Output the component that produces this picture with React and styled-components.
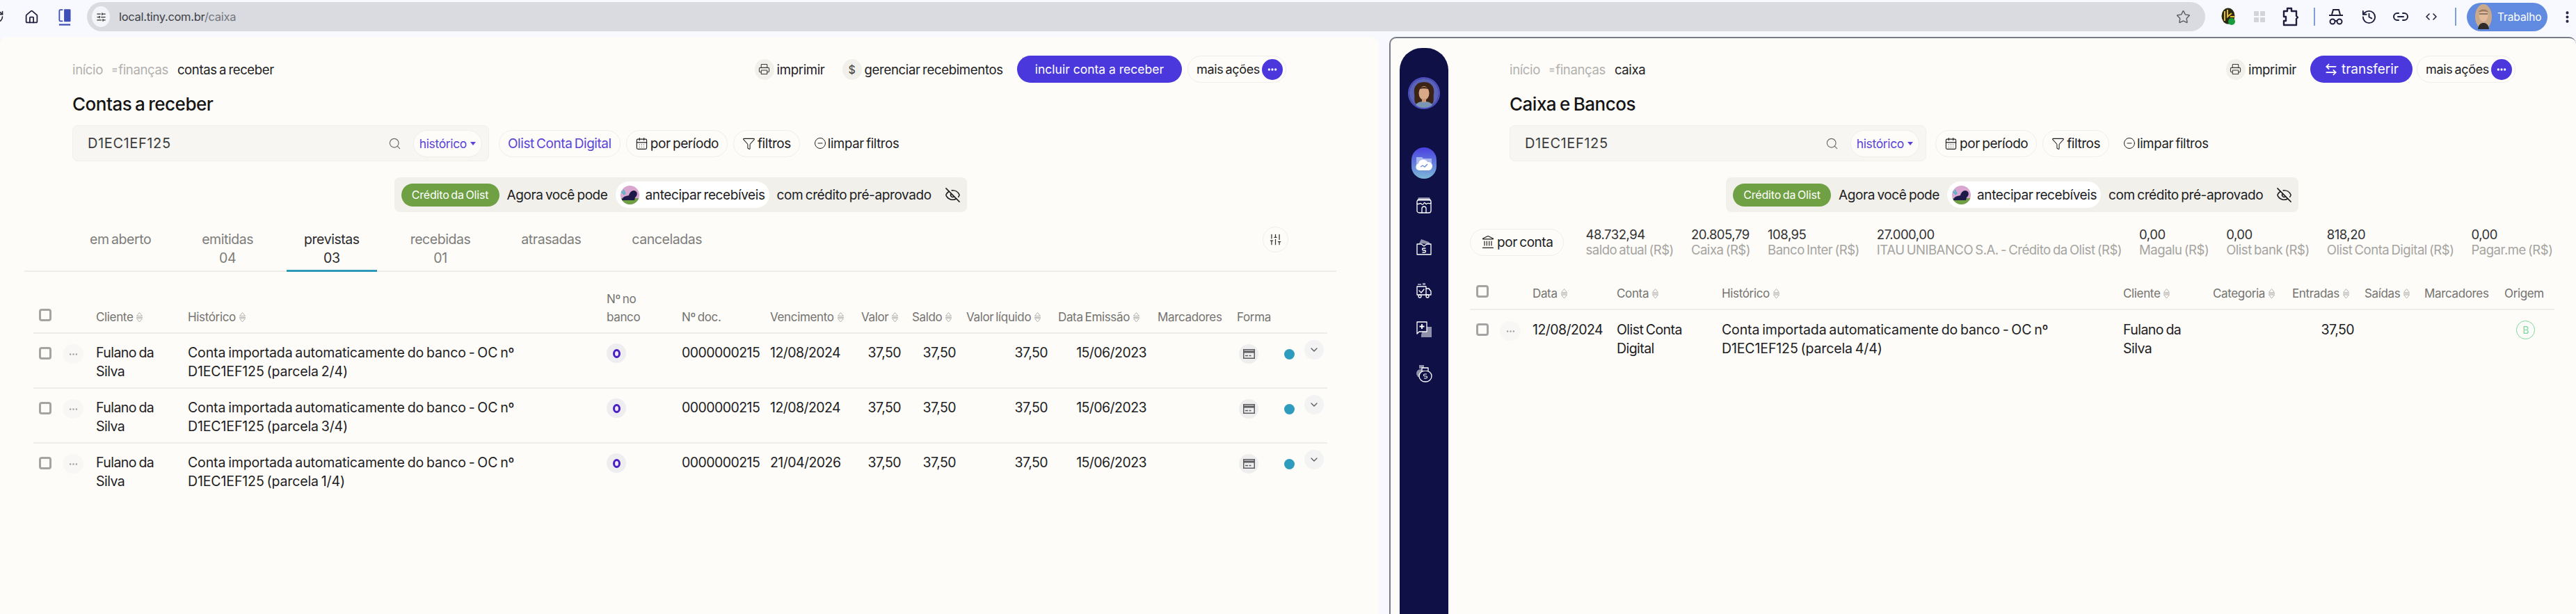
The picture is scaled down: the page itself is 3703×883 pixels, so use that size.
import React from 'react'
import styled, { createGlobalStyle } from 'styled-components'
import {
  Home, Printer, Search, CalendarDays, Funnel, CircleMinus, SlidersVertical, Landmark,
  ArrowLeftRight, EyeOff, ChevronDown, Ellipsis, Star, Link2, History, ChevronLeft, ChevronRight,
  RotateCw, EllipsisVertical, SlidersHorizontal,
} from 'lucide-react'

const GlobalStyle = createGlobalStyle`
  * { box-sizing: border-box; }
  html, body { margin: 0; padding: 0; }
  body {
    background: #f8f9fe;
    font-family: Inter, "Noto Sans", "Liberation Sans", sans-serif;
    font-size: 18px;
    letter-spacing: -0.35px;
    word-spacing: -1.5px;
    color: #1d1d1f;
    overflow: hidden;
  }
`

const Page = styled.div`
  width: 3703px;
  height: 883px;
  display: flex;
  flex-direction: column;
  overflow: hidden;
`

/* browser toolbar */

const BrowserBar = styled.div`
  height: 53px;
  flex: none;
  display: flex;
  align-items: center;
  padding-bottom: 5px;
  background: #f8f9fe;
  overflow: hidden;
`

const ReloadSlot = styled.div`
  width: 6px;
  display: flex;
  justify-content: flex-end;
  color: #2c2c38;
`

const ToolIcon = styled.div`
  width: ${p => p.$w || 44}px;
  flex: none;
  display: flex;
  justify-content: center;
  color: ${p => p.$color || '#1f1f3d'};
`

const AddressBar = styled.div`
  flex: none;
  width: 3045px;
  height: 42px;
  margin-left: 23px;
  padding: 0 21px 0 7px;
  border-radius: 21px;
  background: #d9dbe0;
  display: flex;
  align-items: center;
  color: #3e4046;
  font-size: 16.5px;
  letter-spacing: -0.3px;
`

const TuneBubble = styled.div`
  width: 26px;
  height: 30px;
  border-radius: 50%;
  background: #f4f5f9;
  display: flex;
  align-items: center;
  justify-content: center;
  margin-right: 13px;
`

const UrlPath = styled.span`
  color: #74767d;
`

const UrlText = styled.div`
  flex: 1;
`

const Separator = styled.div`
  width: 2px;
  height: 26px;
  flex: none;
  background: #7f9fd8;
`

const ProfilePill = styled.div`
  width: 116px;
  height: 41px;
  flex: none;
  margin-left: 15px;
  border-radius: 21px;
  background: #608be0;
  display: flex;
  align-items: center;
  padding-left: 12px;
  gap: 8px;
  color: #fff;
  font-size: 15.5px;
  letter-spacing: -0.1px;
`

/* panels */

const Panels = styled.div`
  flex: 1;
  min-height: 0;
  display: flex;
  gap: 15px;
`

const Panel = styled.section`
  height: 100%;
  background: #fdfcf9;
  border-radius: 10px 10px 0 0;
  display: flex;
  flex: ${p => (p.$focused ? '1' : 'none')};
  width: ${p => (p.$focused ? 'auto' : '1982px')};
  min-width: 0;
  padding: 0 ${p => p.$pr}px 0 ${p => p.$pl}px;
  border-top: ${p => (p.$focused ? '2px solid #767c88' : '0')};
  border-left: ${p => (p.$focused ? '2px solid #767c88' : '0')};
`

const Sidebar = styled.nav`
  width: 70px;
  flex: none;
  margin: 14px 31px 0 0;
  border-radius: 32px 32px 0 0;
  background: #0f1046;
  display: flex;
  flex-direction: column;
  align-items: center;
`

const SideAvatar = styled.div`
  width: 46px;
  height: 46px;
  margin-top: 42px;
  margin-bottom: 55px;
  border-radius: 50%;
  overflow: hidden;
  border: 2px solid #4f50c4;
`

const ActiveItem = styled.div`
  width: 36px;
  height: 45px;
  border-radius: 18px;
  background: linear-gradient(180deg, #4a3fe0 0%, #7cb8d8 100%);
  display: flex;
  align-items: center;
  justify-content: center;
`

const SideItem = styled.div`
  height: 24px;
  margin-top: ${p => p.$mt}px;
  display: flex;
  align-items: center;
  justify-content: center;
`

const Main = styled.main`
  flex: 1;
  min-width: 0;
`

const TopRow = styled.div`
  height: 39px;
  margin-top: ${p => p.$mt}px;
  padding: 0 ${p => p.$pr}px 0 ${p => p.$pl}px;
  display: flex;
  align-items: center;
  justify-content: space-between;
`

const Crumbs = styled.div`
  display: flex;
  align-items: center;
  font-size: 18.5px;
  color: #b2b1ae;
`

const CrumbMark = styled.span`
  margin: 0 2px 0 13px;
  font-size: 13px;
`

const CrumbNow = styled.span`
  margin-left: 13px;
  color: #222;
`

const Actions = styled.div`
  display: flex;
  align-items: center;
`

const IconAction = styled.div`
  display: flex;
  align-items: center;
  gap: 4px;
  margin-right: 25px;
  font-size: 18.6px;
`

const IconBubble = styled.span`
  width: 28px;
  height: 30px;
  border-radius: 50%;
  background: #f1f0ea;
  color: #3a3a3a;
  display: flex;
  align-items: center;
  justify-content: center;
  font-size: 16px;
`

const PrimaryButton = styled.button`
  height: 39px;
  padding: 0 ${p => p.$px}px;
  margin-left: -5px;
  border: 0;
  border-radius: 20px;
  background: #4a38dd;
  color: #fff;
  font: inherit;
  font-size: ${p => p.$fs}px;
  display: flex;
  align-items: center;
  gap: 5px;
`

const MoreButton = styled.div`
  height: 39px;
  margin-left: ${p => p.$ml}px;
  padding: 0 4px 0 12px;
  border: 1px solid #efeee9;
  border-radius: 20px;
  display: flex;
  align-items: center;
  gap: 3px;
  font-size: 18px;
`

const MoreDot = styled.span`
  width: 30px;
  height: 30px;
  border-radius: 50%;
  background: #4a38dd;
  color: #fff;
  display: flex;
  align-items: center;
  justify-content: center;
`

const Title = styled.h1`
  margin: 15px 0 14px;
  padding-left: ${p => p.$pl}px;
  height: 32px;
  line-height: 32px;
  font-size: 26px;
  font-weight: 500;
  letter-spacing: -0.5px;
  color: #151515;
`

const FilterRow = styled.div`
  height: 52px;
  padding-left: ${p => p.$pl}px;
  display: flex;
  align-items: center;
`

const SearchBox = styled.div`
  width: 599px;
  height: 52px;
  flex: none;
  padding: 0 9px 0 21px;
  border: 1px solid #f1f0eb;
  border-radius: 8px;
  background: #f7f6f2;
  display: flex;
  align-items: center;
  font-size: 20px;
  letter-spacing: 0.6px;
  color: #3c3c3c;
`

const SearchText = styled.div`
  flex: 1;
`

const Pill = styled.div`
  height: 39px;
  flex: none;
  margin-left: ${p => p.$ml || 0}px;
  margin-right: ${p => p.$mr || 0}px;
  padding: 0 ${p => p.$px || 12}px;
  border: 1px solid #efeee9;
  border-radius: 20px;
  background: #fdfcf9;
  display: flex;
  align-items: center;
  gap: 3px;
  font-size: 19px;
  letter-spacing: -0.45px;
  color: ${p => (p.$accent ? '#5a45d6' : '#1d1d1f')};
`

const HistoryPill = styled(Pill)`
  font-size: 17.5px;
  letter-spacing: -0.35px;
`

const CaretDown = styled.span`
  width: 0;
  height: 0;
  margin-left: 2px;
  border-left: 4px solid transparent;
  border-right: 4px solid transparent;
  border-top: 5px solid #5a45d6;
`

const PlainLink = styled.div`
  margin-left: 20px;
  display: flex;
  align-items: center;
  gap: 2px;
  font-size: 18.5px;
`

const Banner = styled.div`
  width: 823px;
  height: 50px;
  margin: 23px auto 0;
  padding-left: 10px;
  border-radius: 8px;
  background: #f1f0eb;
  display: flex;
  align-items: center;
  font-size: 19px;
  letter-spacing: -0.4px;
`

const GreenTag = styled.span`
  width: 141px;
  height: 33px;
  border-radius: 17px;
  background: #6fa044;
  color: #fff;
  display: flex;
  align-items: center;
  justify-content: center;
  font-size: 16px;
  letter-spacing: -0.2px;
  white-space: nowrap;
`

const BannerText = styled.span`
  margin-left: 11px;
  white-space: nowrap;
`

const BannerPill = styled.span`
  width: 221px;
  height: 38px;
  margin-left: 11px;
  padding-left: 7px;
  border-radius: 19px;
  background: #fff;
  display: flex;
  align-items: center;
  gap: 9px;
  white-space: nowrap;
`

const EyeSlot = styled.span`
  margin-left: 19px;
  display: flex;
`

const Tabs = styled.div`
  margin-top: 26px;
  padding: 0 69px;
  border-bottom: 2px solid #eeede9;
  display: flex;
  gap: 23px;
  align-items: flex-start;
`

const Tab = styled.div`
  height: 60px;
  padding: 0 25px 5px;
  margin-bottom: -2px;
  border-bottom: 3px solid ${p => (p.$active ? '#2f9ab8' : 'transparent')};
  text-align: center;
  line-height: 27px;
  font-size: 19.5px;
  letter-spacing: -0.45px;
  color: ${p => (p.$active ? '#2b2b2b' : '#7d7c79')};
`

const TabTools = styled.div`
  width: 37px;
  height: 37px;
  margin: -5px 0 0 auto;
  border: 1px solid #efeee9;
  border-radius: 50%;
  display: flex;
  align-items: center;
  justify-content: center;
  color: #333;
`

const Table = styled.div`
  margin: ${p => p.$mt}px ${p => p.$mx}px 0;
`

const HeadRow = styled.div`
  display: grid;
  grid-template-columns: ${p => p.$cols};
  align-items: end;
  padding-bottom: ${p => p.$pb}px;
  border-bottom: 2px solid #eeede9;
  line-height: 26px;
  font-size: 17px;
  color: #74736f;
`

const HeadCell = styled.div`
  display: flex;
  align-items: center;
  gap: 4px;
  white-space: nowrap;
`

const TwoLine = styled.div`
  white-space: normal;
  width: 60px;
`

const BodyRow = styled.div`
  display: grid;
  grid-template-columns: ${p => p.$cols};
  align-items: start;
  min-height: 79px;
  padding-top: ${p => p.$pt}px;
  border-bottom: ${p => (p.$last ? '0' : '2px solid #eeede9')};
  line-height: 27px;
  font-size: 19.5px;
  letter-spacing: -0.55px;
  color: #1d1d1f;
`

const Cell = styled.div`
  padding-right: ${p => p.$pr || 0}px;
  text-align: ${p => (p.$right ? 'right' : 'left')};
`

const HistoryCell = styled(Cell)`
  letter-spacing: -0.12px;
`

const Check = styled.div`
  width: 18px;
  height: 18px;
  margin: ${p => p.$mt || 0}px 0 ${p => p.$mb || 0}px ${p => p.$ml}px;
  border: 3px solid #a5a3a3;
  border-radius: 4px;
  background: #fdfcf9;
`

const RowMenu = styled.div`
  width: 30px;
  height: 28px;
  margin-top: 1px;
  border-radius: 50%;
  background: #f8f7f5;
  color: #a09fa6;
  display: flex;
  align-items: center;
  justify-content: center;
`

const SoftCircle = styled.div`
  width: 28px;
  height: 28px;
  border-radius: 50%;
  background: ${p => p.$bg || '#eeeeee'};
  display: flex;
  align-items: center;
  justify-content: center;
  color: #5d5c60;
`

const FormaCell = styled.div`
  display: flex;
  align-items: flex-start;
  margin-left: 3px;
  padding-top: 1px;
`

const StatusDot = styled.span`
  width: 15px;
  height: 15px;
  margin: 7px 14px 0 37px;
  border-radius: 50%;
  flex: none;
  background: #2e9dbd;
`

const Toggle = styled(SoftCircle)`
  margin-top: -6px;
  background: #f4f3f4;
  flex: none;
`

const BankRing = styled.span`
  width: 11px;
  height: 13px;
  border: 3px solid #4a1fc8;
  border-radius: 50%;
`

const Summary = styled.div`
  height: 40px;
  margin-top: 23px;
  display: flex;
  align-items: center;
  gap: 25px;
`

const SummaryItem = styled.div`
  line-height: 22px;
  font-size: 18.5px;
  letter-spacing: -0.47px;
  white-space: nowrap;
  color: #333;
`

const SummaryLabel = styled.div`
  color: #a5a4a0;
`

const OriginBadge = styled.div`
  width: 27px;
  height: 27px;
  margin: 0 0 0 17px;
  border: 1.5px solid #7ed8a0;
  border-radius: 50%;
  display: flex;
  align-items: center;
  justify-content: center;
  font-size: 14px;
  color: #7ed8a0;
`

/* drawings */

const Sort = () => (
  <svg width="11" height="16" viewBox="0 0 11 16" fill="none" stroke="#b5b4b0" strokeWidth="1">
    <path d="M5.5 1.5 9.5 6.5H1.5Z" />
    <path d="M1 8.5h9" />
    <path d="M1.5 10h8l-4 5Z" />
  </svg>
)

const SidePanelIcon = () => (
  <svg width="20" height="27" viewBox="0 0 20 27">
    <path d="M7 2H3a1.5 1.5 0 0 0-1.5 1.5v15A1.5 1.5 0 0 0 3 20h4" fill="none" stroke="#3f4fb8" strokeWidth="2" />
    <path d="M9 1h9a1.5 1.5 0 0 1 1.5 1.5v17A1.5 1.5 0 0 1 18 21H9Z" fill="#3f4fb8" />
    <rect x="1" y="24.5" width="18" height="2.5" fill="#3f4fb8" />
  </svg>
)

const ExtensionBadge = () => (
  <svg width="22" height="26" viewBox="0 0 22 26">
    <ellipse cx="10" cy="12" rx="9.5" ry="11.5" fill="#2a2a14" />
    <path d="M5 5v14M9 3v10l6-5M13 13h6" stroke="#e3b92e" strokeWidth="2" fill="none" />
    <circle cx="15" cy="20" r="5" fill="#1a9b3c" />
  </svg>
)

const FaintGrid = () => (
  <svg width="16" height="16" viewBox="0 0 16 16" fill="#d4d5da">
    <rect x="0" y="0" width="7" height="7" rx="1" />
    <rect x="9" y="0" width="7" height="7" rx="1" />
    <rect x="0" y="9" width="7" height="7" rx="1" />
    <rect x="9" y="9" width="7" height="7" rx="1" />
  </svg>
)

const PuzzleIcon = () => (
  <svg width="24" height="28" viewBox="0 0 24 28" fill="none" stroke="#1f1f3d" strokeWidth="2.4" strokeLinejoin="round">
    <path d="M3 6h5V2h6v4h7v7l2 2-2 2v9H3v-6h3v-6H3Z" />
  </svg>
)

const IncognitoIcon = () => (
  <svg width="22" height="24" viewBox="0 0 22 24" fill="none" stroke="#1f1f3d" strokeWidth="2">
    <path d="M5 9 7 2h8l2 7" />
    <path d="M1 10h20" />
    <circle cx="6" cy="19" r="3.5" />
    <circle cx="16" cy="19" r="3.5" />
    <path d="M9.5 18h3" />
  </svg>
)

const PersonFace = () => (
  <svg width="24" height="36" viewBox="0 0 24 36">
    <ellipse cx="12" cy="18" rx="12" ry="18" fill="#c9a98a" />
    <path d="M4 36c1-7 4-9 8-9s7 2 8 9Z" fill="#2d2a2a" />
    <ellipse cx="12" cy="16" rx="6.5" ry="9" fill="#e3bb9c" />
    <path d="M5 12c1-6 13-6 14 0-3-2-11-2-14 0Z" fill="#9a7a5c" />
    <path d="M6 14h12" stroke="#3a3028" strokeWidth="1" />
  </svg>
)

const WomanFace = () => (
  <svg width="42" height="42" viewBox="0 0 42 42">
    <rect width="42" height="42" fill="#5b63b8" />
    <path d="M7 22C5 8 15 5 21 5s16 3 14 17c-1 6 1 10-2 14H9c-3-4-1-8-2-14Z" fill="#3b2415" />
    <path d="M8 42c1-8 7-9 13-9s12 1 13 9Z" fill="#7b95b5" />
    <ellipse cx="21" cy="21" rx="7.5" ry="10" fill="#d9a887" />
    <path d="M18 29h6v5h-6Z" fill="#c9987a" />
    <path d="M14 15c3-4 11-4 14 0-4-1-10-1-14 0Z" fill="#3b2415" />
  </svg>
)

const BannerArt = () => (
  <svg width="27" height="27" viewBox="0 0 27 27">
    <clipPath id="banner-art"><circle cx="13.5" cy="13.5" r="13.5" /></clipPath>
    <g clipPath="url(#banner-art)">
      <rect width="27" height="27" fill="#d8a6cf" />
      <rect y="18" width="27" height="9" fill="#6fa044" />
      <path d="M2 20c2-6 8-5 10-6 1-5 6-9 10-6 3 2 2 7-1 9l-1 4H2Z" fill="#1d1a4a" />
      <path d="M1 8l5 5M4 6l3 6" stroke="#5ab4c8" strokeWidth="2" />
    </g>
  </svg>
)

const CardIcon = () => (
  <svg width="17" height="14" viewBox="0 0 17 14" fill="none">
    <rect x=".75" y=".75" width="15.5" height="12.5" stroke="#5d5c60" strokeWidth="1.5" />
    <rect x="1" y="2.5" width="15" height="3" fill="#5d5c60" />
    <path d="M3 9.5h4M8.5 9.5h3" stroke="#5d5c60" strokeWidth="1.5" />
  </svg>
)

const sideStroke = { fill: 'none', stroke: '#fff', strokeWidth: 1.3, strokeLinejoin: 'round', strokeLinecap: 'round' }

const CloudFolder = () => (
  <svg width="28" height="28" viewBox="0 0 28 28">
    <path d="M3 5h8l2 2h12v13H3Z" fill="#a9b8ee" />
    <path d="M7 24a5 5 0 0 1-1-9.8A7 7 0 0 1 19 12a6 6 0 0 1 2 12Z" fill="#fff" />
    <path d="M9 19l3-2 3 2 4-4" fill="none" stroke="#6f8fd8" strokeWidth="1.4" />
  </svg>
)

const StoreIcon = () => (
  <svg width="22" height="24" viewBox="0 0 22 24">
    <path d="M3 1h16l2 5H1Z" fill="#8f90aa" />
    <g {...sideStroke}>
      <rect x="1" y="4" width="20" height="19" rx="3" />
      <path d="M1 10c3 2 4-2 6 0s3 1 4-1 3 3 4 1 4 1 6-1" />
      <path d="M8 23v-6a3 3 0 0 1 6 0v6" />
    </g>
  </svg>
)

const WalletIcon = () => (
  <svg width="24" height="24" viewBox="0 0 24 24">
    <path d="M5 7 8 1l11 4 2 3Z" fill="#8f90aa" />
    <g {...sideStroke}>
      <path d="M2 8h6l4 3 4-3h6v15H2Z" />
      <path d="M14 14h-3a1 1 0 0 0 0 3h2a1 1 0 0 1 0 3h-3" />
    </g>
  </svg>
)

const TruckIcon = () => (
  <svg width="24" height="24" viewBox="0 0 24 24">
    <path d="M3 3h5v2H3ZM10 2h4v3h-4Z" fill="#8f90aa" />
    <g {...sideStroke}>
      <path d="M2 7h13v12H2Z" />
      <path d="M15 10h4l3 4v5h-7" />
      <circle cx="6" cy="21" r="2" />
      <circle cx="17" cy="21" r="2" />
      <path d="m5 13 3 3 4-5" />
    </g>
  </svg>
)

const ChatIcon = () => (
  <svg width="24" height="26" viewBox="0 0 24 26">
    <path d="M12 10h11v15H8v-4Z" fill="#8f90aa" />
    <g {...sideStroke} fill="#0f1046">
      <path d="M2 3h14v14H5l-3 3Z" />
    </g>
    <path d="M9 6v7M5.5 9.5h7" stroke="#fff" strokeWidth="1.8" />
  </svg>
)

const BagIcon = () => (
  <svg width="24" height="26" viewBox="0 0 24 26">
    <path d="M5 1h7v5H5Z" fill="#8f90aa" />
    <circle cx="7" cy="13" r="6" fill="#8f90aa" />
    <g {...sideStroke} fill="#0f1046">
      <ellipse cx="14" cy="17" rx="9" ry="8" />
      <path d="M9 9V5h9v4" />
    </g>
    <path d="M16 14h-3a1 1 0 0 0 0 3h2a1 1 0 0 1 0 3h-3" fill="none" stroke="#fff" strokeWidth="1.1" />
  </svg>
)

/* data */

const receberCols = '42px 48px 132px 602px 108px 127px 131px 73px 78px 132px 143px 114px 129px'
const caixaCols = '43px 47px 121px 151px 577px 129px 114px 104px 86px 115px 72px'

const receberHead = [
  ['Cliente', true], ['Histórico', true], ['Nº no banco', false], ['Nº doc.', false], ['Vencimento', true], ['Valor', true],
  ['Saldo', true], ['Valor líquido', true], ['Data Emissão', true], ['Marcadores', false], ['Forma', false],
]

const receberRows = [
  { parcela: '2/4', venc: '12/08/2024' },
  { parcela: '3/4', venc: '12/08/2024' },
  { parcela: '1/4', venc: '21/04/2026' },
]

const caixaHead = [
  ['Data', true], ['Conta', true], ['Histórico', true], ['Cliente', true], ['Categoria', true], ['Entradas', true],
  ['Saídas', true], ['Marcadores', false], ['Origem', false],
]

const saldos = [
  ['48.732,94', 'saldo atual (R$)'],
  ['20.805,79', 'Caixa (R$)'],
  ['108,95', 'Banco Inter (R$)'],
  ['27.000,00', 'ITAU UNIBANCO S.A. - Crédito da Olist (R$)'],
  ['0,00', 'Magalu (R$)'],
  ['0,00', 'Olist bank (R$)'],
  ['818,20', 'Olist Conta Digital (R$)'],
  ['0,00', 'Pagar.me (R$)'],
]

const tabs = [
  ['em aberto', ''],
  ['emitidas', '04'],
  ['previstas', '03', true],
  ['recebidas', '01'],
  ['atrasadas', ''],
  ['canceladas', ''],
]

/* shared pieces */

const HeadLabels = ({ items }) =>
  items.map(([label, sortable]) => (
    <HeadCell key={label}>
      {label === 'Nº no banco' ? <TwoLine>Nº no banco</TwoLine> : label}
      {sortable && <Sort />}
    </HeadCell>
  ))

const PrintAction = () => (
  <IconAction>
    <IconBubble><Printer size={17} strokeWidth={1.5} /></IconBubble>
    imprimir
  </IconAction>
)

const More = ({ ml }) => (
  <MoreButton $ml={ml}>
    mais ações
    <MoreDot><Ellipsis size={16} strokeWidth={3} /></MoreDot>
  </MoreButton>
)

const SearchField = () => (
  <SearchBox>
    <SearchText>D1EC1EF125</SearchText>
    <Search size={19} strokeWidth={1.5} color="#6d6d6d" />
    <HistoryPill $accent $px={8} $ml={17}>
      histórico<CaretDown />
    </HistoryPill>
  </SearchBox>
)

const Clear = () => (
  <PlainLink>
    <CircleMinus size={18} strokeWidth={1.3} />
    limpar filtros
  </PlainLink>
)

const CreditBanner = () => (
  <Banner>
    <GreenTag>Crédito da Olist</GreenTag>
    <BannerText>Agora você pode</BannerText>
    <BannerPill><BannerArt />antecipar recebíveis</BannerPill>
    <BannerText>com crédito pré-aprovado</BannerText>
    <EyeSlot><EyeOff size={23} strokeWidth={1.6} /></EyeSlot>
  </Banner>
)

const ContasPanel = () => (
  <Panel $pl={35} $pr={61}>
    <Main>
      <TopRow $mt={27} $pl={69} $pr={72}>
        <Crumbs>
          início<CrumbMark>≡</CrumbMark>finanças<CrumbNow>contas a receber</CrumbNow>
        </Crumbs>
        <Actions>
          <PrintAction />
          <IconAction><IconBubble>$</IconBubble>gerenciar recebimentos</IconAction>
          <PrimaryButton $px={26} $fs={17.5}>incluir conta a receber</PrimaryButton>
          <More ml={8} />
        </Actions>
      </TopRow>
      <Title $pl={69}>Contas a receber</Title>
      <FilterRow $pl={69}>
        <SearchField />
        <Pill $accent $ml={14}>Olist Conta Digital</Pill>
        <Pill $ml={8}><CalendarDays size={19} strokeWidth={1.4} />por período</Pill>
        <Pill $ml={8}><Funnel size={19} strokeWidth={1.3} />filtros</Pill>
        <Clear />
      </FilterRow>
      <CreditBanner />
      <Tabs>
        {tabs.map(([label, count, active]) => (
          <Tab key={label} $active={active}>
            {label}
            <br />
            {count}
          </Tab>
        ))}
        <TabTools><SlidersVertical size={19} strokeWidth={1.6} /></TabTools>
      </Tabs>
      <Table $mt={26} $mx={13}>
        <HeadRow $cols={receberCols} $pb={9}>
          <Check $ml={8} $mb={7} />
          <span />
          <HeadLabels items={receberHead} />
        </HeadRow>
        {receberRows.map((row, i) => (
          <BodyRow key={row.parcela} $cols={receberCols} $pt={14} $last={i === 2}>
            <Check $ml={8} $mt={5} />
            <RowMenu><Ellipsis size={15} strokeWidth={2} /></RowMenu>
            <Cell $pr={30}>Fulano da Silva</Cell>
            <HistoryCell $pr={120}>{`Conta importada automaticamente do banco - OC nº D1EC1EF125 (parcela ${row.parcela})`}</HistoryCell>
            <Cell><SoftCircle $bg="#eeedf0"><BankRing /></SoftCircle></Cell>
            <Cell>0000000215</Cell>
            <Cell>{row.venc}</Cell>
            <Cell $right $pr={16}>37,50</Cell>
            <Cell $right $pr={15}>37,50</Cell>
            <Cell $right $pr={15}>37,50</Cell>
            <Cell $right $pr={16}>15/06/2023</Cell>
            <Cell />
            <FormaCell>
              <SoftCircle><CardIcon /></SoftCircle>
              <StatusDot />
              <Toggle><ChevronDown size={16} strokeWidth={2} /></Toggle>
            </FormaCell>
          </BodyRow>
        ))}
      </Table>
    </Main>
  </Panel>
)

const CaixaPanel = () => (
  <Panel $focused $pl={13} $pr={31}>
    <Sidebar>
      <SideAvatar><WomanFace /></SideAvatar>
      <ActiveItem><CloudFolder /></ActiveItem>
      <SideItem $mt={26}><StoreIcon /></SideItem>
      <SideItem $mt={36}><WalletIcon /></SideItem>
      <SideItem $mt={38}><TruckIcon /></SideItem>
      <SideItem $mt={32}><ChatIcon /></SideItem>
      <SideItem $mt={40}><BagIcon /></SideItem>
    </Sidebar>
    <Main>
      <TopRow $mt={25} $pl={57} $pr={56}>
        <Crumbs>
          início<CrumbMark>≡</CrumbMark>finanças<CrumbNow>caixa</CrumbNow>
        </Crumbs>
        <Actions>
          <PrintAction />
          <PrimaryButton $px={20} $fs={19}><ArrowLeftRight size={20} strokeWidth={2} />transferir</PrimaryButton>
          <More ml={6} />
        </Actions>
      </TopRow>
      <Title $pl={57}>Caixa e Bancos</Title>
      <FilterRow $pl={57}>
        <SearchField />
        <Pill $ml={13}><CalendarDays size={19} strokeWidth={1.4} />por período</Pill>
        <Pill $ml={8}><Funnel size={19} strokeWidth={1.3} />filtros</Pill>
        <Clear />
      </FilterRow>
      <CreditBanner />
      <Summary>
        <Pill $px={15} $mr={6}><Landmark size={20} strokeWidth={1.4} />por conta</Pill>
        {saldos.map(([value, label]) => (
          <SummaryItem key={label}>
            {value}
            <SummaryLabel>{label}</SummaryLabel>
          </SummaryItem>
        ))}
      </Summary>
      <Table $mt={41} $mx={0}>
        <HeadRow $cols={caixaCols} $pb={9}>
          <Check $ml={9} $mb={7} />
          <span />
          <HeadLabels items={caixaHead} />
        </HeadRow>
        <BodyRow $cols={caixaCols} $pt={15} $last>
          <Check $ml={9} $mt={4} />
          <RowMenu><Ellipsis size={15} strokeWidth={2} /></RowMenu>
          <Cell>12/08/2024</Cell>
          <Cell $pr={30}>Olist Conta Digital</Cell>
          <HistoryCell $pr={20}>Conta importada automaticamente do banco - OC nº D1EC1EF125 (parcela 4/4)</HistoryCell>
          <Cell $pr={30}>Fulano da Silva</Cell>
          <Cell />
          <Cell $right $pr={15}>37,50</Cell>
          <Cell />
          <Cell />
          <Cell><OriginBadge>B</OriginBadge></Cell>
        </BodyRow>
      </Table>
    </Main>
  </Panel>
)

export default function App() {
  return (
    <Page>
      <GlobalStyle />
      <BrowserBar>
        <ReloadSlot><RotateCw size={20} strokeWidth={2} style={{ flex: 'none' }} /></ReloadSlot>
        <ToolIcon $w={78}><Home size={21} strokeWidth={2} /></ToolIcon>
        <ToolIcon $w={18}><SidePanelIcon /></ToolIcon>
        <AddressBar>
          <TuneBubble><SlidersHorizontal size={15} strokeWidth={2} color="#333" /></TuneBubble>
          <UrlText>local.tiny.com.br<UrlPath>/caixa</UrlPath></UrlText>
          <Star size={21} strokeWidth={1.6} color="#5a5c62" />
        </AddressBar>
        <ToolIcon $w={68}><ExtensionBadge /></ToolIcon>
        <ToolIcon $w={20}><FaintGrid /></ToolIcon>
        <ToolIcon $w={68}><PuzzleIcon /></ToolIcon>
        <Separator />
        <ToolIcon $w={60}><IncognitoIcon /></ToolIcon>
        <ToolIcon $w={34}><History size={23} strokeWidth={2} /></ToolIcon>
        <ToolIcon $w={58}><Link2 size={24} strokeWidth={2} /></ToolIcon>
        <ToolIcon $w={30}><ChevronLeft size={16} strokeWidth={2.4} style={{ marginRight: -3 }} /><ChevronRight size={16} strokeWidth={2.4} style={{ marginLeft: -3 }} /></ToolIcon>
        <ToolIcon $w={19} />
        <Separator />
        <ProfilePill><PersonFace />Trabalho</ProfilePill>
        <ToolIcon $w={56}><EllipsisVertical size={21} strokeWidth={2.6} /></ToolIcon>
      </BrowserBar>
      <Panels>
        <ContasPanel />
        <CaixaPanel />
      </Panels>
    </Page>
  )
}
